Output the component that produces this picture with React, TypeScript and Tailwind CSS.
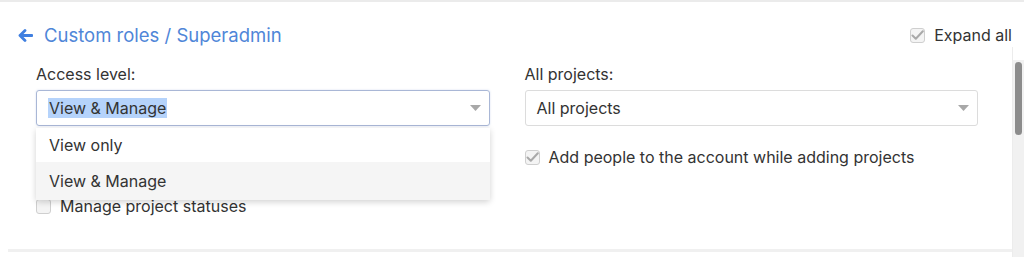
function Caret() {
  return (
    <svg width="11" height="6" viewBox="0 0 11 6" className="shrink-0">
      <path d="M0 0 L11 0 L5.5 6 Z" fill="#a8a8a8" />
    </svg>
  );
}

function Check({ checked }: { checked?: boolean }) {
  return (
    <span className="w-[15px] h-[15px] rounded-[3px] border border-[#cfcfcf] bg-[#f4f4f4] flex items-center justify-center shrink-0">
      {checked && (
        <svg width="13" height="11" viewBox="0 0 13 11">
          <path d="M1.5 5.5 L4.8 8.8 L11.8 1.2" fill="none" stroke="#a9a9a9" strokeWidth="2" strokeLinecap="round" strokeLinejoin="round" />
        </svg>
      )}
    </span>
  );
}

export default function App() {
  return (
    <div className="w-[1024px] h-[257px] bg-white flex flex-col border-t-2 border-[#ebebeb] text-[#333] font-['Inter','Liberation_Sans',sans-serif] overflow-hidden">
      <div className="pt-[21px] h-[45px] pl-[18px] pr-[12px] flex items-center justify-between">
        <div className="flex items-center gap-[11px] text-[18.5px] text-[#4f86d8] leading-[24px]">
          <svg width="15" height="13" viewBox="0 0 15 13">
            <path d="M7 1.5 L2 6.5 L7 11.5 M2 6.5 L14 6.5" fill="none" stroke="#3f7fe0" strokeWidth="2.8" strokeLinecap="round" strokeLinejoin="round" />
          </svg>
          <span>Custom roles / Superadmin</span>
        </div>
        <label className="flex items-center gap-[9px] text-[16px] leading-[20px] text-[#333]">
          <Check checked />
          <span>Expand all</span>
        </label>
      </div>

      <div className="flex-1 flex">
        <div className="flex-1 flex flex-col">
          <div className="pl-[36px] pr-[34px] mt-[17px] grid grid-cols-2 gap-x-[35px]">
            <div className="flex flex-col">
              <div className="text-[16px] leading-[20px]">Access level:</div>
              <div className="relative mt-[6px]">
                <div className="h-[36px] rounded-[3px] border border-[#a9b7d6] shadow-[0_0_2px_rgba(80,120,200,0.25)] flex items-center justify-between pl-[11px] pr-[8px]">
                  <span className="text-[16px] leading-[20px] bg-[#b5d3fb] px-[1px]">View &amp; Manage</span>
                  <Caret />
                </div>
                <div className="absolute left-0 right-0 top-[38px] z-10 bg-white rounded-b-[3px] shadow-[0_2px_6px_rgba(0,0,0,0.18)] flex flex-col text-[16px]">
                  <div className="h-[34px] flex items-center pl-[13px]">View only</div>
                  <div className="h-[38px] flex items-center pl-[13px] bg-[#f5f5f5]">View &amp; Manage</div>
                </div>
              </div>
              <div className="mt-[21px] h-[20px]" />
              <label className="mt-[29px] flex items-center gap-[9px] text-[16px] leading-[20px]">
                <Check />
                <span>Manage project statuses</span>
              </label>
            </div>

            <div className="flex flex-col">
              <div className="text-[16px] leading-[20px]">All projects:</div>
              <div className="mt-[6px] h-[36px] rounded-[3px] border border-[#dcdcdc] flex items-center justify-between pl-[11px] pr-[8px]">
                <span className="text-[16px] leading-[20px]">All projects</span>
                <Caret />
              </div>
              <label className="mt-[21px] flex items-center gap-[9px] text-[16px] leading-[20px]">
                <Check checked />
                <span>Add people to the account while adding projects</span>
              </label>
            </div>
          </div>

          <div className="mt-auto mb-[5px] ml-[8px] h-[3px] bg-[#f0f0f0]" />
        </div>

        <div className="w-[12px] flex flex-col border-l border-[#ececec]">
          <div className="h-[13px]" />
          <div className="flex-1 bg-[#f1f1f1] px-[2px] pt-[2px]">
            <div className="h-[73px] rounded-full bg-[#8c8c8c]" />
          </div>
        </div>
      </div>
    </div>
  );
}
